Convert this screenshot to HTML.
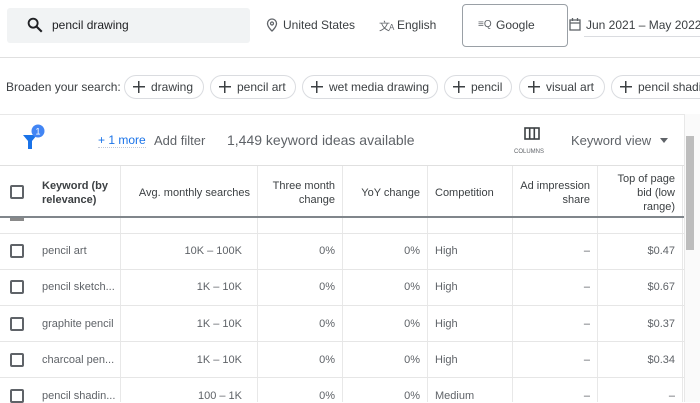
<!DOCTYPE html>
<html><head><meta charset="utf-8"><style>
*{box-sizing:border-box;margin:0;padding:0}
body{width:700px;height:402px;overflow:hidden;background:#fff;font-family:"Liberation Sans",sans-serif;color:#3c4043;position:relative}
.a{position:absolute;white-space:nowrap}
.chip{position:absolute;top:75px;height:24px;border:1px solid #dadce0;border-radius:12px;font-size:12px;line-height:22px;padding-left:26px;color:#3c4043;white-space:nowrap;overflow:hidden}
.chip:before{content:"";position:absolute;left:8px;top:5px;width:12px;height:12px;background:linear-gradient(#3c4043,#3c4043) center/12px 1.5px no-repeat,linear-gradient(#3c4043,#3c4043) center/1.5px 12px no-repeat}
.vl{position:absolute;top:166px;bottom:0;width:1px;background:#e8e8e8}
.hl{position:absolute;left:0;width:684px;height:1px;background:#e6e6e6}
.cb{position:absolute;left:10px;width:14px;height:14px;border:2px solid #5f6368;border-radius:2px}
.t{position:absolute;font-size:11px;color:#5f6368;white-space:nowrap}
.h{position:absolute;font-size:11px;color:#3c4043;line-height:14px}
.r{text-align:right}
</style></head><body>
<div class="a" style="left:7px;top:8px;width:243px;height:35px;background:#f1f3f4;border-radius:3px"></div>
<svg class="a" style="left:26px;top:16px" width="18" height="18" viewBox="0 0 24 24"><circle cx="9.5" cy="9.5" r="6" fill="none" stroke="#202124" stroke-width="2.5"/><path d="M14 14l7 7" stroke="#202124" stroke-width="2.8"/></svg>
<div class="a" style="left:52px;top:18px;font-size:12px;color:#202124">pencil drawing</div>
<svg class="a" style="left:266px;top:18px" width="12" height="14" viewBox="0 0 12 14"><path d="M6 1a4.5 4.5 0 0 0-4.5 4.5C1.5 9 6 13 6 13s4.5-4 4.5-7.5A4.5 4.5 0 0 0 6 1z" fill="none" stroke="#5f6368" stroke-width="1.3"/><circle cx="6" cy="5.5" r="1.5" fill="none" stroke="#5f6368" stroke-width="1.2"/></svg>
<div class="a" style="left:283px;top:18px;font-size:12px">United States</div>
<div class="a" style="left:379px;top:18px;font-size:11px;color:#5f6368;letter-spacing:-1px">文<span style="font-size:8px">A</span></div>
<div class="a" style="left:397px;top:18px;font-size:12px">English</div>
<div class="a" style="left:462px;top:4px;width:106px;height:43px;border:1px solid #9aa0a6;border-radius:4px"></div>
<div class="a" style="left:478px;top:19px;font-size:10px;color:#5f6368">≡Q</div>
<div class="a" style="left:496px;top:18px;font-size:12px">Google</div>
<svg class="a" style="left:569px;top:18px" width="12" height="13" viewBox="0 0 12 13"><rect x="1" y="2" width="10" height="10" fill="none" stroke="#5f6368" stroke-width="1.3"/><path d="M1 5h10M3.5 0v3M8.5 0v3" stroke="#5f6368" stroke-width="1.3"/></svg>
<div class="a" style="left:586px;top:18px;font-size:12px">Jun 2021 – May 2022</div>
<div class="a" style="left:584px;top:36px;width:116px;height:1px;background:#dadce0"></div>
<div class="a" style="left:0;top:57px;width:700px;height:1px;background:#e0e0e0"></div>
<div class="a" style="left:6px;top:80px;font-size:12px">Broaden your search:</div>
<div class="chip" style="left:124px;width:80px">drawing</div>
<div class="chip" style="left:210px;width:86px">pencil art</div>
<div class="chip" style="left:302px;width:136px">wet media drawing</div>
<div class="chip" style="left:444px;width:68px">pencil</div>
<div class="chip" style="left:519px;width:86px">visual art</div>
<div class="chip" style="left:611px;width:110px">pencil shading</div>
<div class="a" style="left:0;top:114px;width:684px;height:1px;background:#e8e8e8"></div>
<svg class="a" style="left:22px;top:123px" width="28" height="28" viewBox="0 0 28 28"><path d="M1 12h14l-5 6v8h-4v-8z" fill="#1a73e8"/><circle cx="16" cy="8" r="6.5" fill="#4285f4"/><text x="16" y="11.5" font-size="9" fill="#fff" text-anchor="middle" font-family="Liberation Sans">1</text></svg>
<div class="a" style="left:98px;top:133px;font-size:12px;color:#1a73e8;border-bottom:1px dotted #c0c8d8">+ 1 more</div>
<div class="a" style="left:154px;top:133px;font-size:13px;color:#5f6368">Add filter</div>
<div class="a" style="left:227px;top:132px;font-size:14px;color:#5f6368">1,449 keyword ideas available</div>
<svg class="a" style="left:524px;top:127px" width="16" height="13" viewBox="0 0 16 13"><rect x="1" y="1" width="14" height="11" fill="none" stroke="#3c4043" stroke-width="1.6"/><path d="M5.7 1v11M10.3 1v11" stroke="#3c4043" stroke-width="1.6"/></svg>
<div class="a" style="left:514px;top:149px;font-size:6px;color:#5f6368">COLUMNS</div>
<div class="a" style="left:571px;top:133px;font-size:13px;color:#5f6368">Keyword view</div>
<div class="a" style="left:660px;top:138px;width:0;height:0;border-left:4px solid transparent;border-right:4px solid transparent;border-top:5px solid #5f6368"></div>
<div class="a" style="left:0;top:165px;width:684px;height:1px;background:#e0e0e0"></div>
<div class="vl" style="left:120px"></div><div class="vl" style="left:257px"></div><div class="vl" style="left:342px"></div><div class="vl" style="left:427px"></div><div class="vl" style="left:512px"></div><div class="vl" style="left:597px"></div><div class="vl" style="left:682px"></div>
<div class="cb" style="top:185px"></div>
<div class="h" style="left:42px;top:179px;font-weight:bold">Keyword (by<br>relevance)</div>
<div class="h r" style="right:450px;top:186px">Avg. monthly searches</div>
<div class="h r" style="right:365px;top:179px">Three month<br>change</div>
<div class="h r" style="right:280px;top:186px">YoY change</div>
<div class="h" style="left:435px;top:186px">Competition</div>
<div class="h r" style="right:110px;top:179px">Ad impression<br>share</div>
<div class="h r" style="right:25px;top:172px">Top of page<br>bid (low<br>range)</div>
<div class="a" style="left:0;top:216px;width:684px;height:2px;background:#80868b"></div>
<div class="a" style="left:10px;top:218px;width:14px;height:3px;background:#8a8a8a"></div>
<div class="hl" style="top:233px"></div><div class="hl" style="top:269px"></div><div class="hl" style="top:305px"></div><div class="hl" style="top:341px"></div><div class="hl" style="top:377px"></div>

<div class="cb" style="top:244px"></div><div class="t" style="left:42px;top:245px">pencil art</div><div class="t r" style="right:458px;top:245px">10K – 100K</div><div class="t r" style="right:365px;top:245px">0%</div><div class="t r" style="right:280px;top:245px">0%</div><div class="t" style="left:435px;top:245px">High</div><div class="t r" style="right:110px;top:245px">–</div><div class="t r" style="right:25px;top:245px">$0.47</div>
<div class="cb" style="top:280px"></div><div class="t" style="left:42px;top:281px">pencil sketch...</div><div class="t r" style="right:458px;top:281px">1K – 10K</div><div class="t r" style="right:365px;top:281px">0%</div><div class="t r" style="right:280px;top:281px">0%</div><div class="t" style="left:435px;top:281px">High</div><div class="t r" style="right:110px;top:281px">–</div><div class="t r" style="right:25px;top:281px">$0.67</div>
<div class="cb" style="top:317px"></div><div class="t" style="left:42px;top:318px">graphite pencil</div><div class="t r" style="right:458px;top:318px">1K – 10K</div><div class="t r" style="right:365px;top:318px">0%</div><div class="t r" style="right:280px;top:318px">0%</div><div class="t" style="left:435px;top:318px">High</div><div class="t r" style="right:110px;top:318px">–</div><div class="t r" style="right:25px;top:318px">$0.37</div>
<div class="cb" style="top:353px"></div><div class="t" style="left:42px;top:354px">charcoal pen...</div><div class="t r" style="right:458px;top:354px">1K – 10K</div><div class="t r" style="right:365px;top:354px">0%</div><div class="t r" style="right:280px;top:354px">0%</div><div class="t" style="left:435px;top:354px">High</div><div class="t r" style="right:110px;top:354px">–</div><div class="t r" style="right:25px;top:354px">$0.34</div>
<div class="cb" style="top:389px"></div><div class="t" style="left:42px;top:390px">pencil shadin...</div><div class="t r" style="right:458px;top:390px">100 – 1K</div><div class="t r" style="right:365px;top:390px">0%</div><div class="t r" style="right:280px;top:390px">0%</div><div class="t" style="left:435px;top:390px">Medium</div><div class="t r" style="right:110px;top:390px">–</div><div class="t r" style="right:25px;top:390px">–</div>
<div class="a" style="left:684px;top:114px;width:16px;height:288px;background:#fafafa;border-left:1px solid #e8e8e8"></div>
<div class="a" style="left:686px;top:136px;width:8px;height:114px;background:#bdbdbd"></div>
</body></html>
